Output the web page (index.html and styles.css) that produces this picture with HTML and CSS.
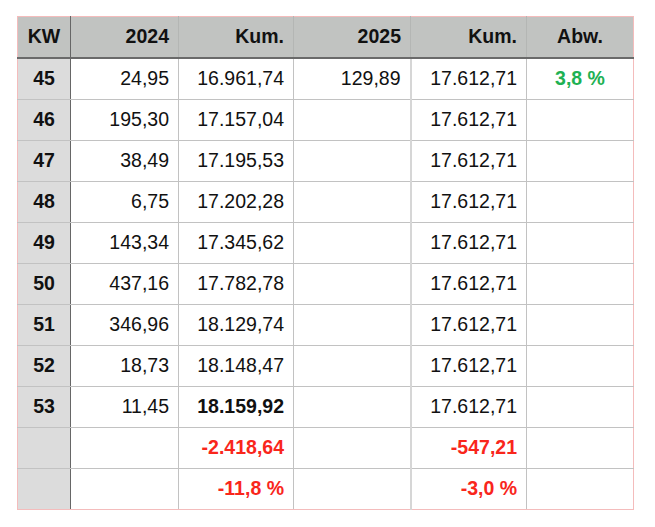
FILE: index.html
```html
<!DOCTYPE html>
<html lang="de">
<head>
<meta charset="utf-8">
<link rel="stylesheet" href="styles.css">
</head>
<body>
<table class="sheet">
  <colgroup>
    <col class="c-kw"><col class="c-a"><col class="c-b"><col class="c-c"><col class="c-d"><col class="c-e">
  </colgroup>
  <thead>
    <tr>
      <th class="kw">KW</th>
      <th>2024</th>
      <th>Kum.</th>
      <th class="sep">2025</th>
      <th>Kum.</th>
      <th class="center">Abw.</th>
    </tr>
  </thead>
  <tbody>
    <tr><td class="kw">45</td><td>24,95</td><td>16.961,74</td><td class="sep">129,89</td><td>17.612,71</td><td class="center pos">3,8 %</td></tr>
    <tr><td class="kw">46</td><td>195,30</td><td>17.157,04</td><td class="sep"></td><td>17.612,71</td><td></td></tr>
    <tr><td class="kw">47</td><td>38,49</td><td>17.195,53</td><td class="sep"></td><td>17.612,71</td><td></td></tr>
    <tr><td class="kw">48</td><td>6,75</td><td>17.202,28</td><td class="sep"></td><td>17.612,71</td><td></td></tr>
    <tr><td class="kw">49</td><td>143,34</td><td>17.345,62</td><td class="sep"></td><td>17.612,71</td><td></td></tr>
    <tr><td class="kw">50</td><td>437,16</td><td>17.782,78</td><td class="sep"></td><td>17.612,71</td><td></td></tr>
    <tr><td class="kw">51</td><td>346,96</td><td>18.129,74</td><td class="sep"></td><td>17.612,71</td><td></td></tr>
    <tr><td class="kw">52</td><td>18,73</td><td>18.148,47</td><td class="sep"></td><td>17.612,71</td><td></td></tr>
    <tr><td class="kw">53</td><td>11,45</td><td class="bold">18.159,92</td><td class="sep"></td><td>17.612,71</td><td></td></tr>
    <tr><td class="kw"></td><td></td><td class="neg">-2.418,64</td><td class="sep"></td><td class="neg">-547,21</td><td></td></tr>
    <tr><td class="kw"></td><td></td><td class="neg">-11,8 %</td><td class="sep"></td><td class="neg">-3,0 %</td><td></td></tr>
  </tbody>
</table>
</body>
</html>
```

FILE: styles.css
```css
html, body {
  margin: 0;
  padding: 0;
  background: #ffffff;
}

body {
  padding: 16px 0 0 17px;
  font-family: "Liberation Sans", Arial, sans-serif;
  font-size: 19.5px;
  color: #111;
}

.sheet {
  border-collapse: collapse;
  table-layout: fixed;
  width: 616px;
  border: 1px solid #f4bcbc;
}

.c-kw { width: 53px; }
.c-a { width: 108px; }
.c-b { width: 115px; }
.c-c { width: 117px; }
.c-d { width: 116px; }
.c-e { width: 107px; }

.sheet th,
.sheet td {
  height: 40px;
  padding: 0 9px 0 4px;
  text-align: right;
  border: 1px solid #c2c2c2;
  white-space: nowrap;
  line-height: 1;
}

.sheet tr > :last-child {
  border-right: 1px solid #f4bcbc;
}

.sheet tbody tr:last-child td {
  border-bottom: 1px solid #f4bcbc;
}

.sheet thead th {
  background: #c1c3c1;
  font-weight: bold;
  border-top: 1px solid #f4bcbc;
  border-bottom: 2px solid #6a6a6a;
  border-left-color: #b4b6b4;
  border-right-color: #b4b6b4;
}

.sheet thead th:first-child {
  border-left: 1px solid #f4bcbc;
}

.sheet .kw {
  text-align: center;
  font-weight: bold;
  padding: 0;
  border-right: 1px solid #666;
  border-left: 1px solid #f4bcbc;
}

.sheet tbody .kw {
  background: #dcdcdc;
}

.sheet td.sep {
  border-right: 2px solid #d6d6d6;
}

.sheet .center {
  text-align: center;
  padding: 0;
}

.bold {
  font-weight: bold;
}

.neg {
  color: #f9261b;
  font-weight: bold;
}

.pos {
  color: #1eb153;
  font-weight: bold;
}
```
